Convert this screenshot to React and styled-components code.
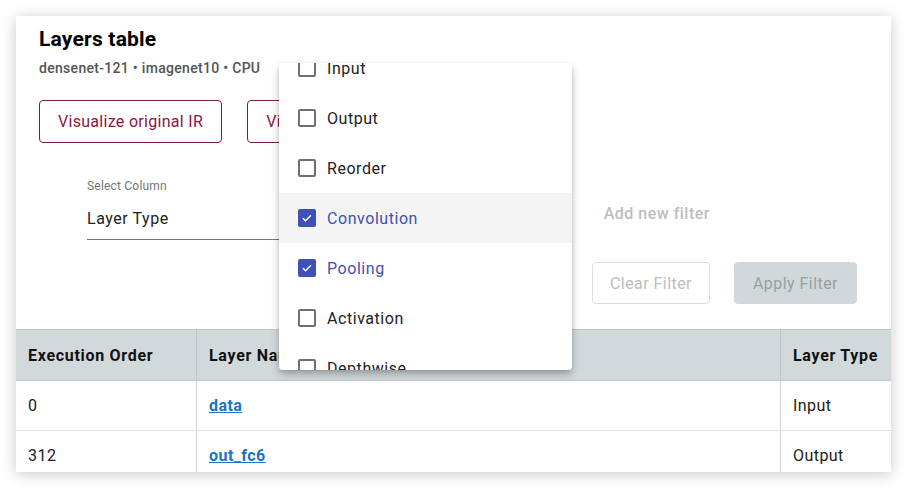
import React, { useLayoutEffect, useRef } from "react";
import styled, { createGlobalStyle } from "styled-components";

const GlobalStyle = createGlobalStyle`
  body {
    margin: 0;
    padding: 16px 24px 24px 16px;
    background: #fff;
    font-family: Roboto, "Noto Sans", Arial, sans-serif;
    color: #212121;
  }
`;

const Card = styled.div`
  position: relative;
  width: 875px;
  height: 456px;
  background: #fff;
  box-shadow: 0 2px 14px rgba(0, 0, 0, 0.22);
  overflow: hidden;
  display: flex;
  flex-direction: column;
`;

const Head = styled.div`
  padding: 9px 34px 0 23px;
  display: flex;
  flex-direction: column;
`;

const Title = styled.h2`
  margin: 0;
  font-size: 21px;
  line-height: 28px;
  font-weight: 700;
  letter-spacing: 0.2px;
  color: #000;
`;

const Subtitle = styled.div`
  margin-top: 5px;
  font-size: 14px;
  line-height: 20px;
  font-weight: 500;
  letter-spacing: 0.3px;
  color: #545454;
`;

const ButtonRow = styled.div`
  display: flex;
  gap: 25px;
  margin-top: 22px;
`;

const OutlineButton = styled.button`
  height: 43px;
  padding: 0 18px;
  border: 1px solid #7d1a48;
  border-radius: 4px;
  background: #fff;
  color: #8a1546;
  font-family: inherit;
  font-size: 16px;
  letter-spacing: 0.3px;
`;

const FilterArea = styled.div`
  display: grid;
  grid-template-columns: 200px 1fr auto;
  align-items: end;
  padding: 0 0 0 48px;
  margin-top: 36px;
`;

const SelectField = styled.div`
  display: flex;
  flex-direction: column;
  border-bottom: 1px solid #757575;
  padding-bottom: 10px;
  width: ${(p) => p.$width}px;
`;

const SelectLabel = styled.span`
  font-size: 12px;
  line-height: 14px;
  letter-spacing: 0.2px;
  color: #757575;
`;

const SelectValue = styled.span`
  margin-top: 16px;
  font-size: 16px;
  line-height: 20px;
  letter-spacing: 0.55px;
  color: #212121;
`;

const AddFilter = styled.span`
  grid-column: 3;
  align-self: center;
  margin: 8px 147px 0 0;
  font-size: 16px;
  font-weight: 500;
  letter-spacing: 0.5px;
  color: #bdbdbd;
`;

const ActionRow = styled.div`
  display: flex;
  justify-content: flex-end;
  gap: 24px;
  margin-top: 22px;
`;

const ActionButton = styled.button`
  height: 42px;
  padding: 0 ${(p) => (p.$filled ? 18 : 17)}px;
  border-radius: 4px;
  font-family: inherit;
  font-size: 16px;
  letter-spacing: 0.45px;
  border: 1px solid ${(p) => (p.$filled ? "#d0d8d9" : "#dddddd")};
  background: ${(p) => (p.$filled ? "#d0d8d9" : "#fff")};
  color: ${(p) => (p.$filled ? "#9a9fa0" : "#bdbdbd")};
`;

const Table = styled.table`
  margin-top: 25px;
  width: 100%;
  border-collapse: collapse;
  font-size: 16px;
  letter-spacing: 0.45px;
`;

const Th = styled.th`
  height: 50px;
  padding: 0 12px;
  text-align: left;
  font-weight: 700;
  letter-spacing: 0.7px;
  background: #d1d9da;
  color: #111;
  border-top: 1px solid #bfc7c9;
  border-bottom: 1px solid #bfc7c9;
  border-left: 1px solid #bfc7c9;
  width: ${(p) => p.$w || "auto"};
  &:first-child {
    border-left: none;
  }
`;

const Td = styled.td`
  height: 49px;
  padding: 0 12px;
  color: #212121;
  border-bottom: 1px solid #dde2e3;
  border-left: 1px solid #d0d6d8;
  &:first-child {
    border-left: none;
  }
`;

const LayerLink = styled.a`
  color: #1a73c4;
  font-weight: 700;
  text-decoration: underline;
`;

const Menu = styled.div`
  position: absolute;
  left: 263px;
  top: 47px;
  width: 293px;
  height: 307px;
  background: #fff;
  border-radius: 4px;
  box-shadow: 0 5px 10px rgba(0, 0, 0, 0.2), 0 2px 4px rgba(0, 0, 0, 0.14);
  overflow-y: scroll;
  &::-webkit-scrollbar {
    width: 10px;
  }
  &::-webkit-scrollbar-track {
    background: #e5e5e5;
  }
  &::-webkit-scrollbar-thumb {
    background: #f0906a;
  }
`;

const MenuList = styled.ul`
  list-style: none;
  margin: 0;
  padding: 8px 0;
`;

const MenuItem = styled.li`
  height: 50px;
  display: flex;
  align-items: center;
  gap: 11px;
  padding-left: 19px;
  font-size: 16px;
  letter-spacing: 0.55px;
  background: ${(p) => (p.$hover ? "#f4f4f4" : "transparent")};
  color: ${(p) => (p.$checked ? "#3f51b5" : "#212121")};
`;

const Box = styled.span`
  width: 18px;
  height: 18px;
  box-sizing: border-box;
  border-radius: 2px;
  border: ${(p) => (p.$checked ? "none" : "2px solid #6f6f6f")};
  background: ${(p) => (p.$checked ? "#3f51b5" : "#fff")};
  display: flex;
  align-items: center;
  justify-content: center;
`;

const options = [
  { label: "Input" },
  { label: "Output" },
  { label: "Reorder" },
  { label: "Convolution", checked: true, hover: true },
  { label: "Pooling", checked: true },
  { label: "Activation" },
  { label: "Depthwise" },
  { label: "Eltwise" },
];

const rows = [
  { order: "0", name: "data", type: "Input" },
  { order: "312", name: "out_fc6", type: "Output" },
];

const Check = () => (
  <svg width="12" height="12" viewBox="0 0 24 24">
    <path d="M4 12.5l5 5L20 6.5" fill="none" stroke="#fff" strokeWidth="3" />
  </svg>
);

const App = () => {
  const menuRef = useRef(null);

  useLayoutEffect(() => {
    if (menuRef.current) menuRef.current.scrollTop = 28;
  }, []);

  return (
    <>
      <GlobalStyle />
      <Card>
        <Head>
          <Title>Layers table</Title>
          <Subtitle>densenet-121 • imagenet10 • CPU</Subtitle>
          <ButtonRow>
            <OutlineButton>Visualize original IR</OutlineButton>
            <OutlineButton>Visualize runtime graph</OutlineButton>
          </ButtonRow>
          <FilterArea>
            <SelectField $width={200}>
              <SelectLabel>Select Column</SelectLabel>
              <SelectValue>Layer Type</SelectValue>
            </SelectField>
            <AddFilter>Add new filter</AddFilter>
          </FilterArea>
          <ActionRow>
            <ActionButton>Clear Filter</ActionButton>
            <ActionButton $filled>Apply Filter</ActionButton>
          </ActionRow>
        </Head>
        <Table>
          <thead>
            <tr>
              <Th $w="156px">Execution Order</Th>
              <Th>Layer Name</Th>
              <Th $w="86px">Layer Type</Th>
            </tr>
          </thead>
          <tbody>
            {rows.map((r) => (
              <tr key={r.order}>
                <Td>{r.order}</Td>
                <Td>
                  <LayerLink>{r.name}</LayerLink>
                </Td>
                <Td>{r.type}</Td>
              </tr>
            ))}
          </tbody>
        </Table>
        <Menu ref={menuRef}>
          <MenuList>
            {options.map((o) => (
              <MenuItem key={o.label} $checked={o.checked} $hover={o.hover}>
                <Box $checked={o.checked}>{o.checked && <Check />}</Box>
                {o.label}
              </MenuItem>
            ))}
          </MenuList>
        </Menu>
      </Card>
    </>
  );
};

export default App;
